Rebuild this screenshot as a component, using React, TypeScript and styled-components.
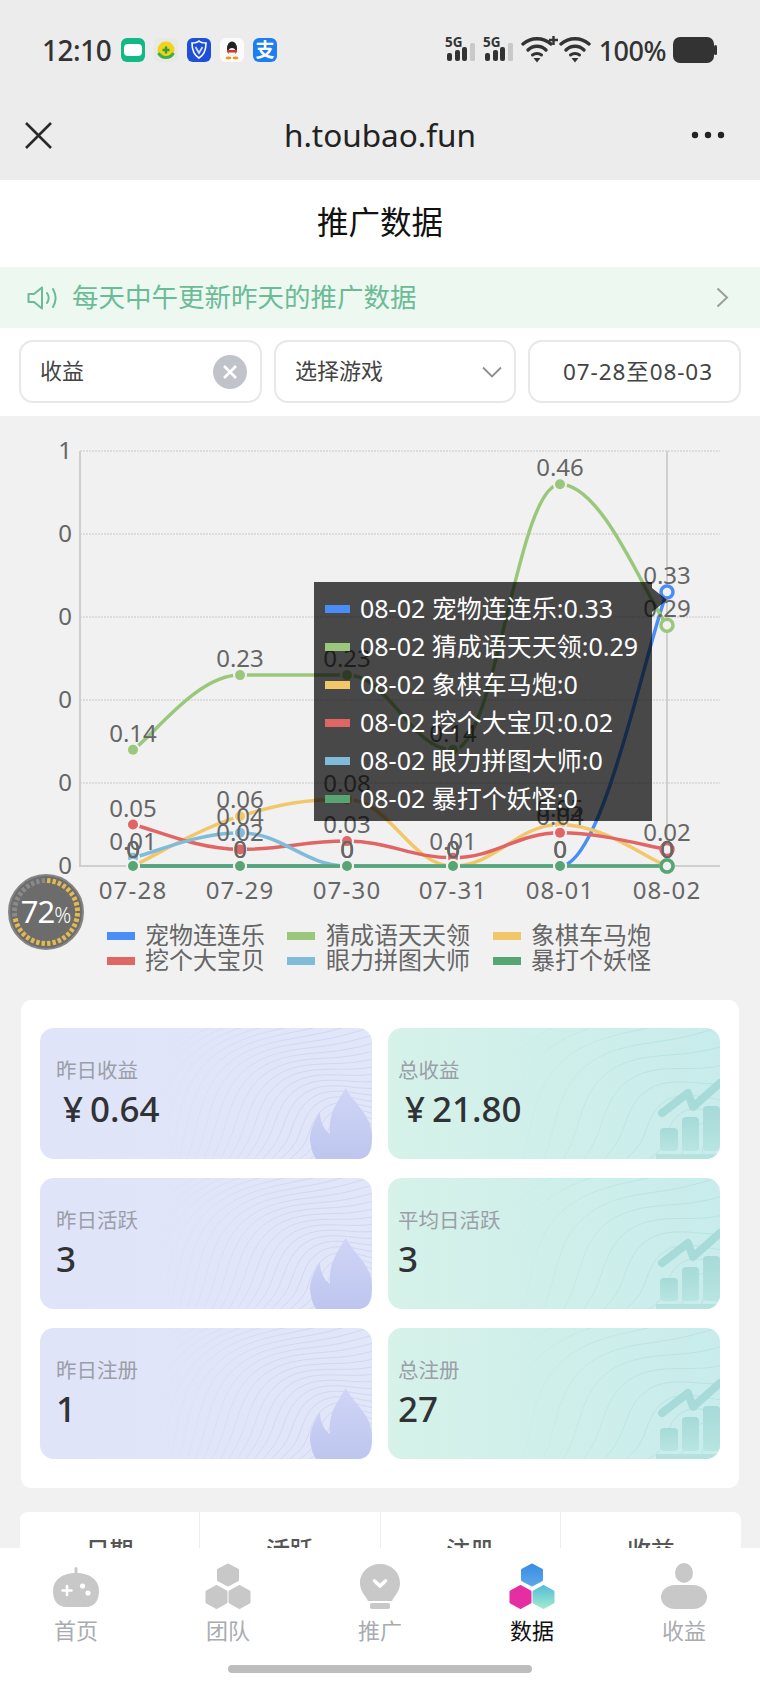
import React from 'react'
import styled, { createGlobalStyle } from 'styled-components'

const FONT = '"Noto Sans", "Noto Sans CJK SC", sans-serif'

const GlobalStyle = createGlobalStyle`
  html, body {
    margin: 0;
    padding: 0;
    background: #f1f1f1;
    font-family: ${FONT};
  }
  * { box-sizing: border-box; }
`

const Page = styled.div`
  position: relative;
  width: 760px;
  height: 1688px;
  overflow: hidden;
  background: #f1f1f1;
`

const TopBar = styled.div`
  background: #ececec;
  height: 180px;
`

const StatusBar = styled.div`
  height: 90px;
  padding: 10px 43px 0 42px;
  display: flex;
  align-items: center;
  justify-content: space-between;
  color: #333;
`

const StatusLeft = styled.div`
  display: flex;
  align-items: center;
  gap: 9px;
`

const StatusRight = styled.div`
  display: flex;
  align-items: center;
`

const Time = styled.span`
  font-size: 28px;
  font-weight: 500;
  width: 69px;
  margin-right: 1px;
  letter-spacing: -0.5px;
`

const Percent = styled.span`
  font-size: 27px;
  font-weight: 500;
  margin: 0 7px 0 2px;
  letter-spacing: -0.5px;
`

const AppIcon = styled.div<{ $bg: string }>`
  width: 24px;
  height: 24px;
  border-radius: 6px;
  background: ${p => p.$bg};
  display: flex;
  align-items: center;
  justify-content: center;
  color: #fff;
  font-size: 19px;
  font-weight: 700;
  line-height: 1;
`

const NavBar = styled.div`
  height: 90px;
  padding: 0 30px;
  display: grid;
  grid-template-columns: 1fr auto 1fr;
  align-items: center;
`

const CloseIcon = styled.svg`
  margin-left: -5px;
`

const NavTitle = styled.div`
  font-size: 31.5px;
  color: #222;
  line-height: 1;
`

const Dots = styled.svg`
  justify-self: end;
  margin-right: 5px;
`

const TitleBar = styled.div`
  height: 87px;
  background: #fff;
  padding-bottom: 8px;
  display: flex;
  align-items: center;
  justify-content: center;
  font-size: 31.5px;
  color: #111;
`

const Notice = styled.div`
  height: 61px;
  background: #edf8f1;
  padding: 0 31px 4px 27px;
  display: flex;
  align-items: center;
  gap: 14px;
  font-size: 26.5px;
  color: #6cbb97;
`

const NoticeIcon = styled.svg`
  margin-top: 4px;
`

const NoticeArrow = styled.svg`
  margin: 4px 0 0 auto;
`

const Filters = styled.div`
  height: 88px;
  background: #fff;
  padding: 12px 19px 13px;
  display: flex;
  gap: 12px;
`

const FilterBox = styled.div<{ $width: number; $center?: boolean }>`
  width: ${p => p.$width}px;
  border: 2px solid #e8e8e8;
  border-radius: 14px;
  padding: 0 12px 0 19px;
  display: flex;
  align-items: center;
  justify-content: ${p => (p.$center ? 'center' : 'space-between')};
  font-size: 22px;
  color: #444;
`

const FilterText = styled.span`
  margin-bottom: 5px;
`

const DateText = styled.span`
  font-size: 22.5px;
  letter-spacing: 0.9px;
  margin-bottom: 2px;
`

const ClearButton = styled.div`
  width: 34px;
  height: 34px;
  border-radius: 50%;
  background: #c1c3cb;
  display: flex;
  align-items: center;
  justify-content: center;
  margin-right: 1px;
`

const ChartSvg = styled.svg`
  display: block;
  width: 760px;
  height: 584px;
  font-family: ${FONT};
  font-size: 24px;
`

const Badge = styled.div`
  position: absolute;
  left: 8px;
  top: 874px;
  width: 76px;
  height: 76px;
  border-radius: 50%;
  background: #6c6c6c;
  border: 2px solid #858585;
  display: flex;
  align-items: baseline;
  justify-content: center;
  padding-top: 15px;
  color: #fff;
`

const BadgeRing = styled.svg`
  position: absolute;
  left: -2px;
  top: -2px;
`

const BadgeValue = styled.span`
  font-size: 31px;
  line-height: 40px;
  letter-spacing: -1px;
`

const BadgeUnit = styled.span`
  font-size: 21px;
  font-weight: 300;
`

const Panel = styled.div`
  margin: 0 21px;
  padding: 28px 19px 29px;
  background: #fff;
  border-radius: 10px;
  display: grid;
  grid-template-columns: 332px 332px;
  column-gap: 16px;
  row-gap: 19px;
`

const StatCard = styled.div<{ $tone: 'violet' | 'teal' }>`
  position: relative;
  height: 131px;
  border-radius: 14px;
  overflow: hidden;
  padding: 27px 16px 0 ${p => (p.$tone === 'violet' ? 16 : 10)}px;
  background: ${p =>
    p.$tone === 'violet'
      ? 'linear-gradient(90deg, #e0e4f9, #e2e6f9)'
      : 'linear-gradient(90deg, #d6f2e9, #c8ecec)'};
`

const StatLabel = styled.div`
  position: relative;
  font-size: 20.5px;
  line-height: 30px;
  color: #9b9ea8;
`

const StatValue = styled.div`
  position: relative;
  font-size: 35px;
  line-height: 48px;
  font-weight: 500;
  color: #303236;
`

const Yen = styled.span`
  margin: 0 7px 0 7px;
`

const CardArt = styled.svg`
  position: absolute;
  left: 0;
  top: 0;
`

const WaveGroup = styled.svg`
  position: absolute;
  left: 0;
  top: 0;
  mask-image: linear-gradient(90deg, transparent 35%, #000 80%);
`

const Table = styled.div`
  margin: 24px 19px 0 20px;
  background: #fff;
  border-radius: 8px;
  display: grid;
  grid-template-columns: repeat(4, 1fr);
`

const HeadCell = styled.div`
  height: 80px;
  padding-top: 21px;
  text-align: center;
  font-size: 24px;
  line-height: 34px;
  font-weight: 500;
  color: #555;
  border-right: 1px solid #eee;
  &:last-child { border-right: 0; }
`

const TabBar = styled.div`
  position: absolute;
  left: 0;
  bottom: 0;
  width: 760px;
  height: 140px;
  background: #fff;
  display: grid;
  grid-template-columns: repeat(5, 152px);
`

const TabItem = styled.div<{ $active?: boolean }>`
  display: flex;
  flex-direction: column;
  align-items: center;
  padding-top: 14px;
  font-size: 22px;
  line-height: 30px;
  color: ${p => (p.$active ? '#111' : '#a9abb0')};
`

const TabIcon = styled.svg`
  display: block;
  margin-bottom: 3px;
`

const HomeIndicator = styled.div`
  position: absolute;
  left: 228px;
  bottom: 15px;
  width: 304px;
  height: 8px;
  border-radius: 4px;
  background: #bdbdbd;
`

// chart geometry, same numbers as the canvas in the screenshot
const XS = [133, 240, 347, 453, 560, 667]
const DAYS = ['07-28', '07-29', '07-30', '07-31', '08-01', '08-02']
const ZERO_Y = 866
const UNIT = 830
const GRID = [451, 534, 617, 700, 783]
const Y_LABELS = ['1', '0', '0', '0', '0', '0']

const SERIES = [
  { name: '宠物连连乐', color: '#4a8df6', data: [0, 0, 0, 0, 0, 0.33] },
  { name: '猜成语天天领', color: '#9ac77b', data: [0.14, 0.23, 0.23, 0.14, 0.46, 0.29] },
  { name: '象棋车马炮', color: '#f2c76a', data: [0, 0.06, 0.08, 0, 0.05, 0] },
  { name: '挖个大宝贝', color: '#e06666', data: [0.05, 0.02, 0.03, 0.01, 0.04, 0.02] },
  { name: '眼力拼图大师', color: '#80bcd9', data: [0.01, 0.04, 0, 0, 0, 0] },
  { name: '暴打个妖怪', color: '#58a574', data: [0, 0, 0, 0, 0, 0] },
]

const LEGEND = [
  { series: 0, swatch: 107, text: 145, y: 944 },
  { series: 1, swatch: 287, text: 326, y: 944 },
  { series: 2, swatch: 493, text: 531, y: 944 },
  { series: 3, swatch: 107, text: 145, y: 969 },
  { series: 4, swatch: 287, text: 326, y: 969 },
  { series: 5, swatch: 493, text: 531, y: 969 },
]

type Pt = { x: number; y: number }

function curvePath(pts: Pt[]) {
  const isTurn = (i: number) =>
    pts[i - 1] && pts[i + 1]
      ? pts[i].y >= Math.max(pts[i - 1].y, pts[i + 1].y) || pts[i].y <= Math.min(pts[i - 1].y, pts[i + 1].y)
      : false
  let d = `M${pts[0].x} ${pts[0].y}`
  for (let i = 0; i < pts.length - 1; i++) {
    const prev = pts[Math.max(i - 1, 0)]
    const next2 = pts[Math.min(i + 2, pts.length - 1)]
    const ax = pts[i].x + (pts[i + 1].x - prev.x) * 0.2
    let ay = pts[i].y + (pts[i + 1].y - prev.y) * 0.2
    const bx = pts[i + 1].x - (next2.x - pts[i].x) * 0.2
    let by = pts[i + 1].y - (next2.y - pts[i].y) * 0.2
    if (isTurn(i + 1)) by = pts[i + 1].y
    if (isTurn(i)) ay = pts[i].y
    d += ` C${ax} ${ay} ${bx} ${by} ${pts[i + 1].x} ${pts[i + 1].y}`
  }
  return d
}

function Chart() {
  const seriesPts = SERIES.map(s => s.data.map((v, i) => ({ x: XS[i], y: ZERO_Y - v * UNIT })))
  return (
    <ChartSvg viewBox="0 416 760 584">
      {GRID.map(y => (
        <line key={y} x1={80} x2={720} y1={y} y2={y} stroke="#dcdcdc" strokeWidth={2} strokeDasharray="2 1" />
      ))}
      <line x1={80} x2={80} y1={451} y2={867} stroke="#cfcfcf" strokeWidth={2} />
      <line x1={80} x2={720} y1={866} y2={866} stroke="#cfcfcf" strokeWidth={2} />
      <line x1={667} x2={667} y1={451} y2={866} stroke="#cfcfcf" strokeWidth={2} />
      {Y_LABELS.map((t, i) => (
        <text key={i} x={72} y={i === 0 ? 459 : GRID[i] ? GRID[i] + 8 : 874} textAnchor="end" fill="#666">{t}</text>
      ))}
      {DAYS.map((d, i) => (
        <text key={d} x={XS[i]} y={899} textAnchor="middle" fill="#666" letterSpacing={1.2}>{d}</text>
      ))}
      {SERIES.map((s, i) => (
        <path key={s.name} d={curvePath(seriesPts[i])} fill="none" stroke={s.color} strokeWidth={3.5} />
      ))}
      {SERIES.map((s, i) =>
        seriesPts[i].map((p, j) =>
          j === 5 ? (
            <circle key={s.name + j} cx={p.x} cy={p.y} r={6} fill="#f1f1f1" stroke={s.color} strokeWidth={3.5} />
          ) : (
            <g key={s.name + j}>
              <circle cx={p.x} cy={p.y} r={7} fill="#f1f1f1" />
              <circle cx={p.x} cy={p.y} r={5} fill={s.color} />
            </g>
          ),
        ),
      )}
      {SERIES.map((s, i) =>
        s.data.map((v, j) => (
          <text key={s.name + j} x={XS[j]} y={seriesPts[i][j].y - 8} textAnchor="middle" fill="#666">{v}</text>
        )),
      )}
      <rect x={314} y={582} width={338} height={239} fill="#000" fillOpacity={0.7} />
      <path d="M652 588 L667 600 L652 612 Z" fill="#000" fillOpacity={0.7} />
      {SERIES.map((s, i) => (
        <g key={s.name}>
          <rect x={325} y={605 + i * 38} width={25} height={8} fill={s.color} />
          <text x={360} y={618 + i * 38} fill="#fff" fontSize={25}>{`08-02 ${s.name}:${s.data[5]}`}</text>
        </g>
      ))}
      {LEGEND.map(l => (
        <g key={l.series}>
          <rect x={l.swatch} y={l.y - 12} width={28} height={8} fill={SERIES[l.series].color} />
          <text x={l.text} y={l.y} fill="#666">{SERIES[l.series].name}</text>
        </g>
      ))}
    </ChartSvg>
  )
}

function ProgressRing() {
  const ticks = Array.from({ length: 36 }, (_, i) => i)
  return (
    <BadgeRing width={76} height={76} viewBox="0 0 76 76">
      {ticks.map(i => {
        const a = ((i + 0.5) / 36) * Math.PI * 2
        const sin = Math.sin(a)
        const cos = Math.cos(a)
        return (
          <line
            key={i}
            x1={38 + sin * 29}
            y1={38 - cos * 29}
            x2={38 + sin * 34}
            y2={38 - cos * 34}
            stroke={i / 36 < 0.72 ? '#e2bb50' : '#8a8a8a'}
            strokeWidth={3.4}
          />
        )
      })}
    </BadgeRing>
  )
}

// contour lines behind the card numbers
function wavePaths(step: number) {
  const out: string[] = []
  for (let r = 40; r < 240; r += step) {
    let d = ''
    for (let t = 0; t <= 32; t++) {
      const a = (t / 32) * (Math.PI / 2)
      const wob = 8 * Math.sin(a * 6 + r / 50)
      const x = 345 - (r * 1.25 + wob) * Math.cos(a)
      const y = 155 - (r + wob) * Math.sin(a)
      d += `${t ? 'L' : 'M'}${x.toFixed(1)} ${y.toFixed(1)}`
    }
    out.push(d)
  }
  return out
}

const VIOLET_WAVES = wavePaths(7)
const TEAL_WAVES = wavePaths(17)

function Flame() {
  return (
    <CardArt width={332} height={131} viewBox="0 0 332 131">
      <defs>
        <linearGradient id="flameFill" x1="0" y1="0" x2="0" y2="1">
          <stop offset="0" stopColor="#d0d5f6" />
          <stop offset="1" stopColor="#bec6ef" />
        </linearGradient>
      </defs>
      <path
        d="M305.7 60 C298 74 288 84 290 106 C285 103 280 95 280 84 C272 96 268 108 271 118 C272 124 274 128 276 131 L325 131 C330 126 332 118 332 108 C332 88 316 78 305.7 60Z"
        fill="url(#flameFill)"
      />
    </CardArt>
  )
}

function Growth() {
  return (
    <CardArt width={332} height={131} viewBox="0 0 332 131">
      <defs>
        <linearGradient id="barFill" x1="0" y1="0" x2="0" y2="1">
          <stop offset="0" stopColor="#a6dad8" />
          <stop offset="1" stopColor="#b8e5e1" />
        </linearGradient>
      </defs>
      <path d="M274 85 L300 65 L305 79 L332 55" fill="none" stroke="#a6dbd9" strokeWidth={8} strokeLinecap="round" strokeLinejoin="round" />
      <rect x={272} y={100} width={18} height={23} rx={4} fill="url(#barFill)" />
      <rect x={294} y={89} width={17} height={34} rx={4} fill="url(#barFill)" />
      <rect x={315} y={78} width={17} height={45} rx={4} fill="url(#barFill)" />
      <rect x={268} y={126} width={64} height={5} fill="#b5e2df" />
    </CardArt>
  )
}

function Stat({ tone, label, value, money }: { tone: 'violet' | 'teal'; label: string; value: string; money?: boolean }) {
  const waves = tone === 'violet' ? VIOLET_WAVES : TEAL_WAVES
  return (
    <StatCard $tone={tone}>
      <WaveGroup width={332} height={131} viewBox="0 0 332 131">
        {waves.map((d, i) => (
          <path key={i} d={d} fill="none" stroke={tone === 'violet' ? '#aab2dc' : '#8ccccb'} strokeOpacity={0.28} strokeWidth={1} />
        ))}
      </WaveGroup>
      {tone === 'violet' ? <Flame /> : <Growth />}
      <StatLabel>{label}</StatLabel>
      <StatValue>
        {money && <Yen>¥</Yen>}
        {value}
      </StatValue>
    </StatCard>
  )
}

function hexPoints(cx: number, cy: number, w: number, h: number) {
  const hw = w / 2
  const hh = h / 2
  return [
    [cx, cy - hh],
    [cx + hw, cy - hh / 2],
    [cx + hw, cy + hh / 2],
    [cx, cy + hh],
    [cx - hw, cy + hh / 2],
    [cx - hw, cy - hh / 2],
  ]
    .map(p => p.join(','))
    .join(' ')
}

const GREY = '#c8c8c8'

function HexTrio({ top, left, right }: { top: string; left: string; right: string }) {
  return (
    <>
      <polygon points={hexPoints(30, 13, 19, 20)} fill={top} stroke={top} strokeWidth={3} strokeLinejoin="round" />
      <polygon points={hexPoints(18.5, 35, 19, 21)} fill={left} stroke={left} strokeWidth={3} strokeLinejoin="round" />
      <polygon points={hexPoints(41.5, 35, 19, 21)} fill={right} stroke={right} strokeWidth={3} strokeLinejoin="round" />
    </>
  )
}

function TabGlyph({ kind }: { kind: string }) {
  return (
    <TabIcon width={60} height={50} viewBox="0 0 60 50">
      {kind === 'home' && (
        <>
          <rect x={28.5} y={5} width={3} height={8} rx={1.5} fill={GREY} />
          <path d="M30 11 C44 11 53 18 53 29 C53 40 47 45 40 45 H20 C13 45 7 40 7 29 C7 18 16 11 30 11Z" fill={GREY} />
          <path d="M21 24 V33 M16.5 28.5 H25.5" stroke="#fff" strokeWidth={2.6} strokeLinecap="round" />
          <circle cx={36.5} cy={24} r={2.6} fill="#fff" />
          <circle cx={42} cy={31} r={2.6} fill="#fff" />
        </>
      )}
      {kind === 'team' && <HexTrio top={GREY} left={GREY} right={GREY} />}
      {kind === 'promo' && (
        <>
          <path d="M30 2 C41 2 50 10 50 21 C50 30 44 34 42 39 H18 C16 34 10 30 10 21 C10 10 19 2 30 2Z" fill={GREY} />
          <rect x={20} y={41} width={20} height={6} rx={2} fill={GREY} />
          <path d="M24.5 19 L30 24 L35.5 19" fill="none" stroke="#fff" strokeWidth={3.6} strokeLinecap="round" strokeLinejoin="round" />
        </>
      )}
      {kind === 'data' && (
        <>
          <defs>
            <linearGradient id="hexBlue" x1="0" y1="0" x2="0" y2="1">
              <stop offset="0" stopColor="#3b8ee6" />
              <stop offset="1" stopColor="#5ba6e8" />
            </linearGradient>
            <linearGradient id="hexTeal" x1="0" y1="0" x2="0" y2="1">
              <stop offset="0" stopColor="#58bfd8" />
              <stop offset="1" stopColor="#9fe8ce" />
            </linearGradient>
          </defs>
          <HexTrio top="url(#hexBlue)" left="#e52ea2" right="url(#hexTeal)" />
        </>
      )}
      {kind === 'income' && (
        <>
          <ellipse cx={30} cy={11} rx={9} ry={10} fill={GREY} />
          <rect x={7} y={23} width={46} height={24} rx={14} fill={GREY} />
        </>
      )}
    </TabIcon>
  )
}

function SignalIcon() {
  return (
    <svg width={38} height={30} viewBox="0 0 38 30" overflow="visible">
      <text x={0} y={12} fontSize={13.5} fontWeight={700} fill="#333" fontFamily={FONT}>5G</text>
      <rect x={2} y={18} width={5} height={8} rx={2} fill="#333" />
      <rect x={10} y={15} width={5} height={11} rx={2} fill="#333" />
      <rect x={17} y={12} width={5} height={14} rx={2} fill="#333" />
      <rect x={25} y={8} width={5} height={18} rx={1.5} fill="#c9c9c9" />
    </svg>
  )
}

function WifiIcon({ plus }: { plus?: boolean }) {
  return (
    <svg width={38} height={30} viewBox="0 0 38 30">
      <path d="M2 9 C10 2 22 2 30 9" fill="none" stroke="#333" strokeWidth={3.4} strokeLinecap="round" />
      <path d="M7 15 C12 10 20 10 25 15" fill="none" stroke="#333" strokeWidth={3.4} strokeLinecap="round" />
      <path d="M11.5 20 C14 18 18 18 20.5 20" fill="none" stroke="#333" strokeWidth={3} strokeLinecap="round" />
      <path d="M12.5 23 H19.5 L16 27.5Z" fill="#333" />
      {plus && <path d="M28 5 H37 M32.5 1 V10" stroke="#333" strokeWidth={2.4} />}
    </svg>
  )
}

function StatusApps() {
  return (
    <>
      <AppIcon $bg="#12b886">
        <svg width={18} height={12} viewBox="0 0 18 12">
          <rect width={18} height={12} rx={4} fill="#fff" />
        </svg>
      </AppIcon>
      <AppIcon $bg="#e6e9e4">
        <svg width={20} height={20} viewBox="0 0 20 20">
          <circle cx={10} cy={10} r={8.5} fill="#f2d21c" />
          <path d="M2.5 13 A8.5 8.5 0 0 0 17.5 13" fill="none" stroke="#3fae49" strokeWidth={3} />
          <path d="M10 6.5 V13.5 M6.5 10 H13.5" stroke="#2e9e3f" strokeWidth={2.4} />
        </svg>
      </AppIcon>
      <AppIcon $bg="#1d4fd8">
        <svg width={18} height={20} viewBox="0 0 18 20">
          <path d="M2 3 C6 3 8 2 9 1 C10 2 12 3 16 3 C16 11 14 15 9 18 C4 15 2 11 2 3Z" fill="none" stroke="#fff" strokeWidth={1.6} />
          <path d="M5.5 7 L9 13 L12.5 7" fill="none" stroke="#cfe0ff" strokeWidth={1.8} />
        </svg>
      </AppIcon>
      <AppIcon $bg="#fbfbfb">
        <svg width={16} height={20} viewBox="0 0 16 20">
          <ellipse cx={8} cy={8.5} rx={5} ry={7} fill="#222" />
          <ellipse cx={8} cy={12} rx={3.6} ry={4} fill="#f4f4f4" />
          <rect x={3} y={10} width={10} height={2.5} fill="#d9332b" />
          <ellipse cx={4.5} cy={18} rx={3} ry={1.4} fill="#e89a1e" />
          <ellipse cx={11.5} cy={18} rx={3} ry={1.4} fill="#e89a1e" />
        </svg>
      </AppIcon>
      <AppIcon $bg="#1f7df2">支</AppIcon>
    </>
  )
}

const TABS = [
  { kind: 'home', label: '首页' },
  { kind: 'team', label: '团队' },
  { kind: 'promo', label: '推广' },
  { kind: 'data', label: '数据', active: true },
  { kind: 'income', label: '收益' },
]

export default function App() {
  return (
    <Page>
      <GlobalStyle />
      <TopBar>
        <StatusBar>
          <StatusLeft>
            <Time>12:10</Time>
            <StatusApps />
          </StatusLeft>
          <StatusRight>
            <SignalIcon />
            <SignalIcon />
            <WifiIcon plus />
            <WifiIcon />
            <Percent>100%</Percent>
            <svg width={44} height={26} viewBox="0 0 44 26">
              <rect x={0} y={0} width={41} height={26} rx={7} fill="#333" />
              <rect x={41} y={8} width={3} height={10} rx={1.5} fill="#333" />
            </svg>
          </StatusRight>
        </StatusBar>
        <NavBar>
          <CloseIcon width={27} height={27} viewBox="0 0 27 27">
            <path d="M1 1 L26 26 M26 1 L1 26" stroke="#2a2a2a" strokeWidth={2.6} />
          </CloseIcon>
          <NavTitle>h.toubao.fun</NavTitle>
          <Dots width={34} height={8} viewBox="0 0 34 8">
            <circle cx={4} cy={4} r={3.2} fill="#222" />
            <circle cx={17} cy={4} r={3.2} fill="#222" />
            <circle cx={30} cy={4} r={3.2} fill="#222" />
          </Dots>
        </NavBar>
      </TopBar>
      <TitleBar>推广数据</TitleBar>
      <Notice>
        <NoticeIcon width={31} height={24} viewBox="0 0 31 24">
          <path d="M1.5 8 H7 L15 1.5 V22.5 L7 16 H1.5Z" fill="none" stroke="#6cbb97" strokeWidth={2} strokeLinejoin="round" />
          <path d="M20 7 C22 10 22 14 20 17 M26 3 C29.5 9 29.5 15 26 21" fill="none" stroke="#6cbb97" strokeWidth={2} strokeLinecap="round" />
        </NoticeIcon>
        每天中午更新昨天的推广数据
        <NoticeArrow width={13} height={21} viewBox="0 0 13 21">
          <path d="M1.5 1.5 L11 10.5 L1.5 19.5" fill="none" stroke="#9a9e9c" strokeWidth={2} />
        </NoticeArrow>
      </Notice>
      <Filters>
        <FilterBox $width={243}>
          <FilterText>收益</FilterText>
          <ClearButton>
            <svg width={16} height={16} viewBox="0 0 16 16">
              <path d="M2 2 L14 14 M14 2 L2 14" stroke="#fff" strokeWidth={2.6} />
            </svg>
          </ClearButton>
        </FilterBox>
        <FilterBox $width={242}>
          <FilterText>选择游戏</FilterText>
          <svg width={20} height={12} viewBox="0 0 20 12">
            <path d="M1 1.5 L10 10.5 L19 1.5" fill="none" stroke="#8e8e8e" strokeWidth={1.8} />
          </svg>
        </FilterBox>
        <FilterBox $width={213} $center>
          <DateText>07-28至08-03</DateText>
        </FilterBox>
      </Filters>
      <Chart />
      <Badge>
        <ProgressRing />
        <BadgeValue>72</BadgeValue>
        <BadgeUnit>%</BadgeUnit>
      </Badge>
      <Panel>
        <Stat tone="violet" label="昨日收益" value="0.64" money />
        <Stat tone="teal" label="总收益" value="21.80" money />
        <Stat tone="violet" label="昨日活跃" value="3" />
        <Stat tone="teal" label="平均日活跃" value="3" />
        <Stat tone="violet" label="昨日注册" value="1" />
        <Stat tone="teal" label="总注册" value="27" />
      </Panel>
      <Table>
        <HeadCell>日期</HeadCell>
        <HeadCell>活跃</HeadCell>
        <HeadCell>注册</HeadCell>
        <HeadCell>收益</HeadCell>
      </Table>
      <TabBar>
        {TABS.map(t => (
          <TabItem key={t.kind} $active={t.active}>
            <TabGlyph kind={t.kind} />
            {t.label}
          </TabItem>
        ))}
      </TabBar>
      <HomeIndicator />
    </Page>
  )
}
